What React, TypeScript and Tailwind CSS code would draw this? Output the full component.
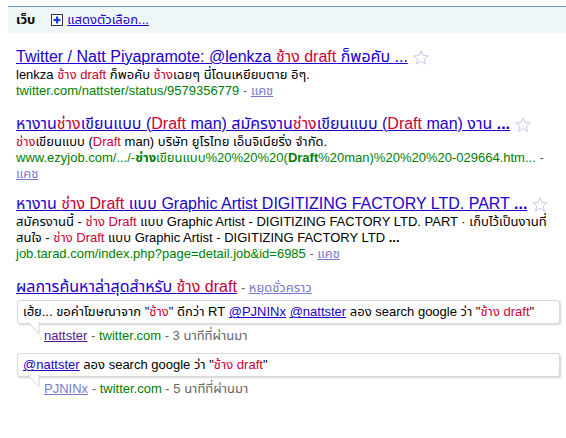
import React from 'react'

const font = "font-['Liberation_Sans','Tahoma','Noto_Sans_Thai','Loma','Garuda',sans-serif]"

function Em({ children }: { children: React.ReactNode }) {
  return <span className="text-[#cc0033]">{children}</span>
}

function Star() {
  return (
    <svg width="16" height="15" viewBox="0 0 16 15" className="ml-[5px] shrink-0">
      <path
        d="M8 0.8 L10 5.6 L15.2 5.9 L11.2 9.2 L12.5 14.2 L8 11.4 L3.5 14.2 L4.8 9.2 L0.8 5.9 L6 5.6 Z"
        fill="white"
        stroke="#c6c6f0"
        strokeWidth="1"
      />
    </svg>
  )
}

function Title({ children }: { children: React.ReactNode }) {
  return (
    <div className="flex items-center h-[20px]">
      <a className="text-[16px] leading-[20px] text-[#2200cc] underline whitespace-nowrap">{children}</a>
      <Star />
    </div>
  )
}

function Cache() {
  return <a className="text-[#7777cc] underline">แคช</a>
}

function PlusIcon() {
  return (
    <svg width="12" height="12" viewBox="0 0 12 12" className="mr-[4px]">
      <rect x="0.5" y="0.5" width="11" height="11" fill="white" stroke="#335" />
      <rect x="5" y="2.5" width="2.2" height="7" fill="#1a3fd6" />
      <rect x="2.5" y="4.9" width="7" height="2.2" fill="#1a3fd6" />
    </svg>
  )
}

function Tweet({ children, meta }: { children: React.ReactNode; meta: React.ReactNode }) {
  return (
    <div>
      <div className="relative ml-px mr-[6px] h-[24px] flex items-center px-[5px] border border-[#d9d9d9] rounded-[3px] bg-white shadow-[1px_1px_2px_rgba(0,0,0,0.18)] text-[13px] text-black whitespace-nowrap">
        {children}
        <svg width="12" height="13" viewBox="0 0 12 13" className="absolute left-[10px] top-full -mt-px">
          <path d="M0 0 L11 12 L11 0 Z" fill="white" />
          <path d="M0 0 L11 12 L11 0" fill="none" stroke="#d4d4d4" strokeWidth="1" />
        </svg>
      </div>
      <div className="mt-[4px] pl-[28px] text-[13px] leading-[16px] text-[#666]">{meta}</div>
    </div>
  )
}

export default function App() {
  return (
    <div className={`w-[566px] h-[438px] bg-white ${font} text-black`}>
      <div className="pt-[6px] pl-2">
        <div className="h-[27px] border-t border-[#6b90da] bg-[#f0f7f9] flex items-center pl-2 text-[13px]">
          <b className="mr-[16px]">เว็บ</b>
          <PlusIcon />
          <a className="text-[#2200cc] underline">แสดงตัวเลือก...</a>
        </div>
      </div>

      <div className="pl-4 mt-[14px]">
        <div className="mb-[15px]">
          <Title>
            Twitter / Natt Piyapramote: @lenkza <Em>ช้าง draft</Em> ก็พอคับ ...
          </Title>
          <div className="text-[13px] leading-[16px]">
            lenkza <Em>ช้าง draft</Em> ก็พอคับ <Em>ช้าง</Em>เฉยๆ นี่โดนเหยียบตาย อิๆ.
          </div>
          <div className="text-[13px] leading-[16px] text-[#666]">
            <span className="text-[#008000]">twitter.com/nattster/status/9579356779</span> - <Cache />
          </div>
        </div>

        <div className="mb-[12px]">
          <Title>
            หางาน<Em>ช่าง</Em>เขียนแบบ (<Em>Draft</Em> man) สมัครงาน<Em>ช่าง</Em>เขียนแบบ (<Em>Draft</Em> man) งาน <b>...</b>
          </Title>
          <div className="text-[13px] leading-[16px]">
            <Em>ช่าง</Em>เขียนแบบ (<Em>Draft</Em> man) บริษัท ยูโรไทย เอ็นจิเนียริ่ง จำกัด.
          </div>
          <div className="text-[13px] leading-[16px] text-[#666]">
            <span className="text-[#008000]">
              www.ezyjob.com/.../-<b>ช่าง</b>เขียนแบบ%20%20%20(<b>Draft</b>%20man)%20%20%20-029664.htm...
            </span>{' '}
            -
            <br />
            <Cache />
          </div>
        </div>

        <div className="mb-[15px]">
          <Title>
            หางาน <Em>ช่าง Draft</Em> แบบ Graphic Artist DIGITIZING FACTORY LTD. PART <b>...</b>
          </Title>
          <div className="text-[13px] leading-[16px]">
            สมัครงานนี้ - <Em>ช่าง Draft</Em> แบบ Graphic Artist - DIGITIZING FACTORY LTD. PART · เก็บไว้เป็นงานที่
            <br />
            สนใจ - <Em>ช่าง Draft</Em> แบบ Graphic Artist - DIGITIZING FACTORY LTD <b>...</b>
          </div>
          <div className="text-[13px] leading-[16px] text-[#666]">
            <span className="text-[#008000]">job.tarad.com/index.php?page=detail.job&amp;id=6985</span> - <Cache />
          </div>
        </div>

        <div className="h-[20px] flex items-baseline whitespace-nowrap">
          <a className="text-[16px] leading-[20px] text-[#2200cc] underline">
            ผลการค้นหาล่าสุดสำหรับ <Em>ช้าง draft</Em>
          </a>
          <span className="text-[13px] text-[#666] ml-[4px]">
            - <a className="text-[#7777cc] underline">หยุดชั่วคราว</a>
          </span>
        </div>

        <div className="mt-[3px] flex flex-col gap-[9px]">
          <Tweet
            meta={
              <>
                <a className="text-[#551a8b] underline">nattster</a> - <span className="text-[#008000]">twitter.com</span> - 3 นาทีที่ผ่านมา
              </>
            }
          >
            เฮ้ย... ขอค่าโฆษณาจาก "<Em>ช้าง</Em>" ดีกว่า RT&nbsp;<a className="text-[#2200cc] underline">@PJNINx</a>&nbsp;
            <a className="text-[#2200cc] underline">@nattster</a>&nbsp;ลอง search google ว่า "<Em>ช้าง draft</Em>"
          </Tweet>
          <Tweet
            meta={
              <>
                <a className="text-[#7777cc] underline">PJNINx</a> - <span className="text-[#008000]">twitter.com</span> - 5 นาทีที่ผ่านมา
              </>
            }
          >
            <a className="text-[#2200cc] underline">@nattster</a>&nbsp;ลอง search google ว่า "<Em>ช้าง draft</Em>"
          </Tweet>
        </div>
      </div>
    </div>
  )
}
